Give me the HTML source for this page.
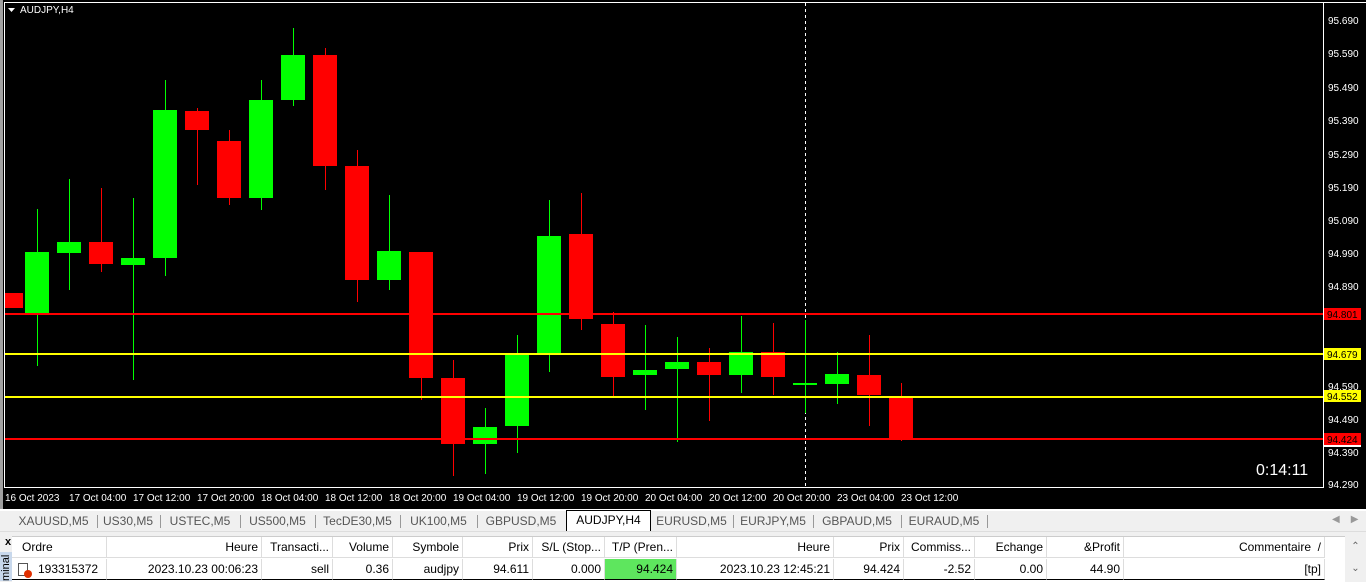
<!DOCTYPE html>
<html><head><meta charset="utf-8"><style>
body{margin:0;width:1366px;height:581px;overflow:hidden;background:#f0f0f0;font-family:"Liberation Sans",sans-serif;position:relative}
.t{position:absolute;font-size:12px;color:#000;white-space:nowrap}
.tab{position:absolute;top:512px;height:18px;font-size:12px;color:#555;line-height:18px;text-align:center}
.sep{position:absolute;top:515px;height:13px;width:1px;background:#999}
.c{position:absolute;font-size:12px;line-height:20px;white-space:nowrap;box-sizing:border-box;padding:0 3px;border-right:1px solid #ddd;overflow:hidden}
</style></head><body>
<svg width="1366" height="510" style="position:absolute;left:0;top:0" font-family="Liberation Sans,sans-serif">
<rect width="1366" height="510" fill="#000"/>
<rect x="0" y="0" width="3" height="510" fill="#a0a0a0"/>
<rect x="4" y="2" width="1362" height="1" fill="#fff"/>
<rect x="4" y="2" width="1" height="486" fill="#fff"/>
<rect x="1323" y="2" width="1" height="486" fill="#fff"/>
<rect x="4" y="487" width="1320" height="1" fill="#fff"/>
<path d="M8 8h7l-3.5 4z" fill="#fff"/>
<text x="20" y="13" font-size="10" fill="#fff">AUDJPY,H4</text>
<line x1="805.5" y1="3" x2="805.5" y2="487" stroke="#fff" stroke-dasharray="3,3"/>
<g id="candles"></g>
<rect x="5" y="313" width="1318" height="2" fill="#f00"/>
<rect x="5" y="353" width="1318" height="2" fill="#ff0"/>
<rect x="5" y="396" width="1318" height="2" fill="#ff0"/>
<rect x="5" y="438" width="1318" height="2" fill="#f00"/>
<g font-size="10" fill="#fff">
<text x="1328" y="24">95.690</text><text x="1328" y="57">95.590</text><text x="1328" y="91">95.490</text><text x="1328" y="124">95.390</text><text x="1328" y="158">95.290</text><text x="1328" y="191">95.190</text><text x="1328" y="224">95.090</text><text x="1328" y="257">94.990</text><text x="1328" y="290">94.890</text><text x="1328" y="390">94.590</text><text x="1328" y="423">94.490</text><text x="1328" y="456">94.390</text><text x="1328" y="488">94.290</text>
</g>
<rect x="1324" y="308" width="37" height="12" fill="#f00"/><text x="1327" y="318" font-size="10" fill="#000">94.801</text>
<rect x="1324" y="348" width="37" height="12" fill="#ff0"/><text x="1327" y="358" font-size="10" fill="#000">94.679</text>
<rect x="1324" y="390" width="37" height="12" fill="#ff0"/><text x="1327" y="400" font-size="10" fill="#000">94.552</text>
<rect x="1324" y="433" width="37" height="12" fill="#f00"/><text x="1327" y="443" font-size="10" fill="#000">94.424</text>
<rect x="1324" y="445" width="37" height="2" fill="#fff"/>
<text x="1256" y="475" font-size="16" fill="#fff">0:14:11</text>
<g font-size="10" fill="#fff">
<text x="5" y="501">16 Oct 2023</text><text x="69" y="501">17 Oct 04:00</text><text x="133" y="501">17 Oct 12:00</text><text x="197" y="501">17 Oct 20:00</text><text x="261" y="501">18 Oct 04:00</text><text x="325" y="501">18 Oct 12:00</text><text x="389" y="501">18 Oct 20:00</text><text x="453" y="501">19 Oct 04:00</text><text x="517" y="501">19 Oct 12:00</text><text x="581" y="501">19 Oct 20:00</text><text x="645" y="501">20 Oct 04:00</text><text x="709" y="501">20 Oct 12:00</text><text x="773" y="501">20 Oct 20:00</text><text x="837" y="501">23 Oct 04:00</text><text x="901" y="501">23 Oct 12:00</text>
</g>
</svg>
<div style="position:absolute;left:0;top:509px;width:1366px;height:2px;background:#fff"></div>
<div class="tab" style="left:6px;width:95px">XAUUSD,M5</div><div class="sep" style="left:97px"></div>
<div class="tab" style="left:98px;width:60px">US30,M5</div><div class="sep" style="left:160px"></div>
<div class="tab" style="left:160px;width:80px">USTEC,M5</div><div class="sep" style="left:240px"></div>
<div class="tab" style="left:240px;width:75px">US500,M5</div><div class="sep" style="left:315px"></div>
<div class="tab" style="left:315px;width:85px">TecDE30,M5</div><div class="sep" style="left:400px"></div>
<div class="tab" style="left:400px;width:77px">UK100,M5</div><div class="sep" style="left:477px"></div>
<div class="tab" style="left:477px;width:88px">GBPUSD,M5</div>
<div class="tab" style="left:566px;top:510px;width:83px;height:20px;background:#fff;border:1px solid #000;border-bottom:none;color:#000">AUDJPY,H4</div>
<div class="tab" style="left:650px;width:83px">EURUSD,M5</div><div class="sep" style="left:733px"></div>
<div class="tab" style="left:733px;width:80px">EURJPY,M5</div><div class="sep" style="left:813px"></div>
<div class="tab" style="left:813px;width:88px">GBPAUD,M5</div><div class="sep" style="left:901px"></div>
<div class="tab" style="left:901px;width:86px">EURAUD,M5</div>
<div class="sep" style="left:987px"></div>
<div class="t" style="left:1332px;top:514px;color:#999;font-size:10px">&#9664;&nbsp;&nbsp;&nbsp;&nbsp;&#9654;</div>
<div style="position:absolute;left:0;top:531px;width:1366px;height:1px;background:#ddd"></div>
<div class="t" style="left:5px;top:536px;font-weight:bold;font-size:11px">x</div>
<div style="position:absolute;left:0;top:552px;width:12px;height:29px;background:#c8d8ec;font-size:11px;writing-mode:vertical-rl;transform:rotate(180deg);line-height:12px;overflow:hidden">minal</div>
<div style="position:absolute;left:12px;top:536px;width:1333px;height:45px;background:#fff;border-top:1px solid #ccc"></div>
<div style="position:absolute;left:1345px;top:536px;width:21px;height:45px;background:#f0f0f0;font-size:10px;color:#666;text-align:center;line-height:22px">&#8963;<br>&#8964;</div>
<div id="tbl"></div>
<script>
var cols=[[12,107,'Ordre','l','193315372'],[107,262,'Heure','r','2023.10.23 00:06:23'],[262,333,'Transacti...','r','sell'],[333,393,'Volume','r','0.36'],[393,463,'Symbole','r','audjpy'],[463,533,'Prix','r','94.611'],[533,605,'S/L (Stop...','r','0.000'],[605,677,'T/P (Pren...','r','94.424'],[677,834,'Heure','r','2023.10.23 12:45:21'],[834,904,'Prix','r','94.424'],[904,975,'Commiss...','r','-2.52'],[975,1047,'Echange','r','0.00'],[1047,1124,'&amp;Profit','r','44.90'],[1124,1325,'Commentaire &nbsp;/','r','[tp]']];
var h='';
cols.forEach(function(c,i){var w=c[1]-c[0];var al=c[3]=='l'?'left':'right';
h+='<div class="c" style="left:'+c[0]+'px;top:537px;width:'+w+'px;height:21px;text-align:'+al+';padding-left:'+(i==0?10:3)+'px;border-bottom:1px solid #ddd">'+c[2]+'</div>';
var bg=i==7?'background:#5ee65e;':'';var al2=i==0?'left':'right';
h+='<div class="c" style="'+bg+'left:'+c[0]+'px;top:559px;width:'+w+'px;height:21px;text-align:'+al2+';padding-left:'+(i==0?26:3)+'px;border-bottom:1px solid #000">'+c[4]+'</div>';});
h+='<div style="position:absolute;left:18px;top:563px;width:10px;height:13px;border:1px solid #555;background:#fff;box-sizing:border-box"></div><div style="position:absolute;left:24px;top:570px;width:8px;height:8px;border-radius:50%;background:#e03000"></div>';
document.getElementById('tbl').innerHTML=h;
var d=[[11,'r',293,308,293,308],[37,'g',252,315,209,366],[69,'g',242,253,179,290],[101,'r',242,264,188,272],[133,'g',258,265,198,380],[165,'g',110,258,80,276],[197,'r',111,130,108,185],[229,'r',141,198,130,205],[261,'g',100,198,80,210],[293,'g',55,100,28,106],[325,'r',55,166,48,190],[357,'r',166,280,150,302],[389,'g',251,280,195,290],[421,'r',252,378,252,400],[453,'r',378,444,360,476],[485,'g',427,444,408,474],[517,'g',355,426,335,453],[549,'g',236,354,200,372],[581,'r',234,319,193,330],[613,'r',324,377,312,398],[645,'g',370,375,325,410],[677,'g',362,369,337,442],[709,'r',362,375,348,421],[741,'g',352,375,316,393],[773,'r',352,377,323,395],[805,'g',383,385,320,413],[837,'g',374,384,352,404],[869,'r',375,395,335,426],[901,'r',396,440,383,441]];
var s='';d.forEach(function(c){var col=c[1]=='g'?'#00ff00':'#ff0000';var x0=c[0]-12;var w=24;if(x0<5){w-=5-x0;x0=5;}
s+='<rect x="'+c[0]+'" y="'+c[4]+'" width="1" height="'+(c[5]-c[4])+'" fill="'+col+'"/>';
s+='<rect x="'+x0+'" y="'+c[2]+'" width="'+w+'" height="'+Math.max(2,c[3]-c[2])+'" fill="'+col+'"/>';});
document.getElementById('candles').innerHTML=s;
</script>
</body></html>
